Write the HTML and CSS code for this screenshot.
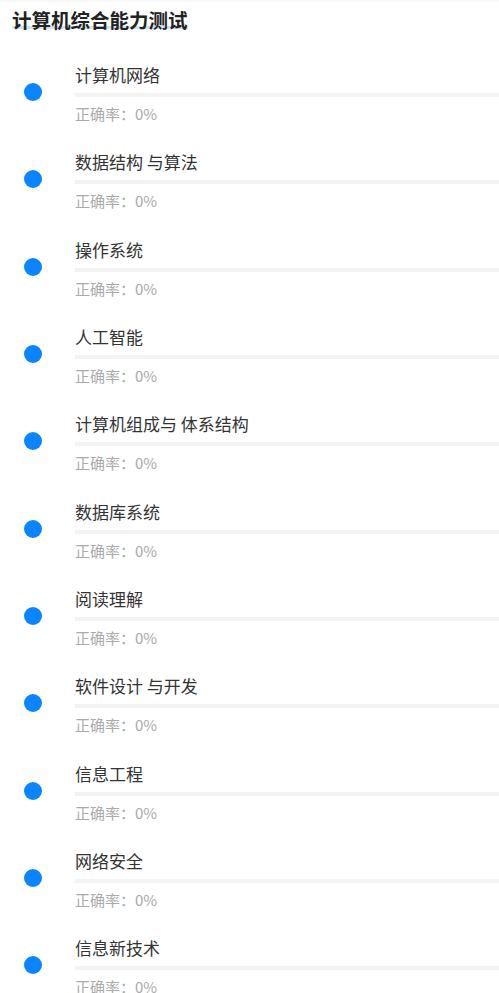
FILE: index.html
```html
<!DOCTYPE html>
<html lang="zh-CN">
<head>
<meta charset="utf-8">
<title>计算机综合能力测试</title>
<link rel="stylesheet" href="styles.css">
</head>
<body>
<div class="page">
  <div class="header"><span class="title">计算机综合能力测试</span></div>
  <ul class="list">
    <li class="item"><div class="dot-col"><span class="dot"></span></div><div class="body"><div class="name">计算机网络</div><div class="bar"></div><div class="acc">正确率：0%</div></div></li>
    <li class="item"><div class="dot-col"><span class="dot"></span></div><div class="body"><div class="name">数据结构 与算法</div><div class="bar"></div><div class="acc">正确率：0%</div></div></li>
    <li class="item"><div class="dot-col"><span class="dot"></span></div><div class="body"><div class="name">操作系统</div><div class="bar"></div><div class="acc">正确率：0%</div></div></li>
    <li class="item"><div class="dot-col"><span class="dot"></span></div><div class="body"><div class="name">人工智能</div><div class="bar"></div><div class="acc">正确率：0%</div></div></li>
    <li class="item"><div class="dot-col"><span class="dot"></span></div><div class="body"><div class="name">计算机组成与 体系结构</div><div class="bar"></div><div class="acc">正确率：0%</div></div></li>
    <li class="item"><div class="dot-col"><span class="dot"></span></div><div class="body"><div class="name">数据库系统</div><div class="bar"></div><div class="acc">正确率：0%</div></div></li>
    <li class="item"><div class="dot-col"><span class="dot"></span></div><div class="body"><div class="name">阅读理解</div><div class="bar"></div><div class="acc">正确率：0%</div></div></li>
    <li class="item"><div class="dot-col"><span class="dot"></span></div><div class="body"><div class="name">软件设计 与开发</div><div class="bar"></div><div class="acc">正确率：0%</div></div></li>
    <li class="item"><div class="dot-col"><span class="dot"></span></div><div class="body"><div class="name">信息工程</div><div class="bar"></div><div class="acc">正确率：0%</div></div></li>
    <li class="item"><div class="dot-col"><span class="dot"></span></div><div class="body"><div class="name">网络安全</div><div class="bar"></div><div class="acc">正确率：0%</div></div></li>
    <li class="item"><div class="dot-col"><span class="dot"></span></div><div class="body"><div class="name">信息新技术</div><div class="bar"></div><div class="acc">正确率：0%</div></div></li>
  </ul>
</div>
</body>
</html>
```
FILE: styles.css
```css
html, body {
  margin: 0;
  padding: 0;
  background: #ffffff;
}
body {
  font-family: "Noto Sans CJK SC", "Noto Sans", sans-serif;
  overflow: hidden;
}
.page {
  border-top: 2px solid #f7f7f7;
  box-sizing: border-box;
  width: 499px;
}
.header {
  height: 53px;
  padding-left: 12px;
  box-sizing: border-box;
}
.title {
  display: inline-block;
  margin-top: 8px;
  font-size: 19.5px;
  line-height: 20px;
  font-weight: 700;
  color: #222222;
  background: linear-gradient(to bottom, transparent 16px, #cfe3f7 16px, #cfe3f7 19px, transparent 19px);
}
.list {
  list-style: none;
  margin: 0;
  padding: 0;
}
.item {
  display: flex;
  height: 87.33px;
  box-sizing: border-box;
  padding-top: 8px;
}
.dot-col {
  width: 75px;
  flex: none;
}
.dot {
  display: block;
  width: 18px;
  height: 18px;
  border-radius: 50%;
  background: #0a84ff;
  margin-top: 20px;
  margin-left: 24px;
}
.body {
  flex: 1;
}
.name {
  font-size: 17px;
  line-height: 24px;
  color: #333333;
}
.bar {
  height: 4px;
  margin-top: 6px;
  background: #f3f3f3;
}
.acc {
  margin-top: 7px;
  font-size: 15px;
  line-height: 20px;
  color: #aaaaaa;
}
```
